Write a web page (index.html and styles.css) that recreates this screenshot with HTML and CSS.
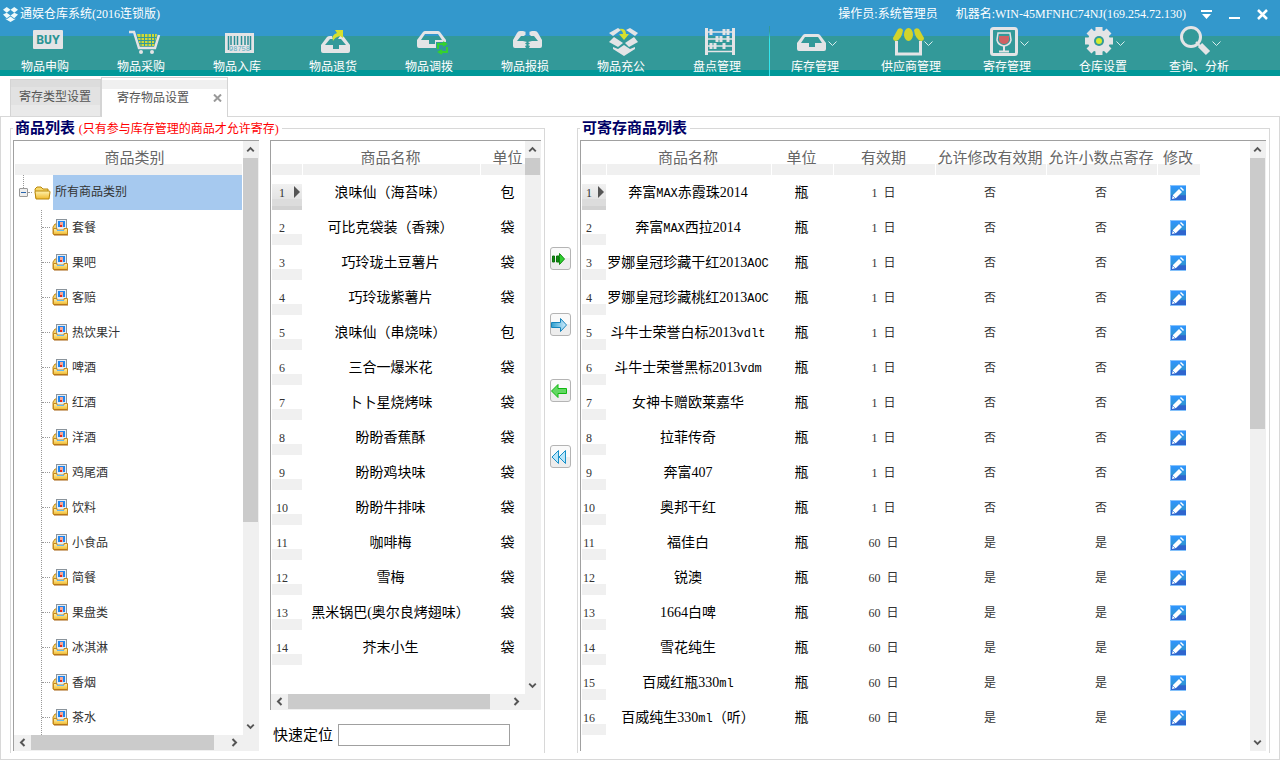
FILE: index.html
```html
<!DOCTYPE html>
<html lang="zh-CN">
<head>
<meta charset="utf-8">
<title>通娱仓库系统(2016连锁版)</title>
<link rel="stylesheet" href="styles.css">
</head>
<body>
<svg class="defs" aria-hidden="true">
  <defs>
    <linearGradient id="gold" x1="0" y1="0" x2="0" y2="1"><stop offset="0" stop-color="#fff3b0"/><stop offset="1" stop-color="#f0b92c"/></linearGradient>
    <linearGradient id="sky" x1="0" y1="0" x2="1" y2="0"><stop offset="0" stop-color="#2f9fce"/><stop offset="1" stop-color="#d4efff"/></linearGradient>
    <linearGradient id="edit-bg" x1="0" y1="0" x2="0" y2="1"><stop offset="0" stop-color="#2f95ff"/><stop offset="0.6" stop-color="#2f95d4"/><stop offset="0.7" stop-color="#2f66cf"/><stop offset="1" stop-color="#2f66cf"/></linearGradient>
  </defs>
  <symbol id="i-up" viewBox="0 0 16 17"><path d="M4.500 10.500L8 7L11.500 10.500" fill="none" stroke="#555" stroke-width="2"/></symbol>
  <symbol id="i-down" viewBox="0 0 16 17"><path d="M4.500 6.500L8 10L11.500 6.500" fill="none" stroke="#555" stroke-width="2"/></symbol>
  <symbol id="i-left" viewBox="0 0 17 15"><path d="M10.500 4L7 7.500L10.500 11" fill="none" stroke="#555" stroke-width="2"/></symbol>
  <symbol id="i-right" viewBox="0 0 17 15"><path d="M6.500 4L10 7.500L6.500 11" fill="none" stroke="#555" stroke-width="2"/></symbol>
  <symbol id="i-tray" viewBox="0 0 29 17"><path fill="#e4e4e6" fill-rule="evenodd" d="M0 9L6 1Q7 0 8 0H21Q22 0 23 1L29 9V15Q29 17 27 17H2Q0 17 0 15ZM8 3H21L25 9H18V13H12V9H4Z"/></symbol>
  <symbol id="i-item" viewBox="0 0 17 17">
    <path d="M1 8L3 5H5V15H1Z" fill="#f5d36a" stroke="#c58a1c"/>
    <rect x="4.500" y="0.500" width="10" height="11" fill="#e3edf7" stroke="#8a949c"/>
    <rect x="6" y="2" width="7" height="6" fill="#1d86f0"/><rect x="8" y="3" width="3" height="5" fill="#f6a796"/><rect x="8" y="6" width="2" height="2" fill="#e32b1c"/>
    <path d="M1.500 9.500H5V11H12V9.500H15.500V15.500H1.500Z" fill="url(#gold)" stroke="#c58a1c"/>
    <path d="M5 11.500H12" stroke="#62b9f4"/><path d="M2 16H16" stroke="#a86414"/>
  </symbol>
  <symbol id="i-edit" viewBox="0 0 16 16">
    <rect width="16" height="16" fill="#85c2fb"/><rect x="1" y="1" width="15" height="14" fill="url(#edit-bg)"/>
    <path d="M2 14L3 10L9 4L12 7L6 13Z" fill="#fff"/><path d="M10 3L11 2L14 5L13 6Z" fill="#fff"/><path d="M3 11L5 13" stroke="#63aef0"/>
  </symbol>
  <symbol id="i-drop" viewBox="0 0 9 6"><path d="M0.500 0.500L4.500 4.500L8.500 0.500" fill="none" stroke="#d9eeee"/></symbol>
</svg>

<header class="app-header">
  <div class="titlebar">
    <svg class="logo" viewBox="0 0 16 16" aria-hidden="true"><g fill="#eefafa"><path d="M4 0L8 3L4 6L0 3Z"/><path d="M12 0L16 3L12 6L8 3Z"/><path d="M0 8L4 6L8 9L4 12Z"/><path d="M16 8L12 6L8 9L12 12Z"/><path d="M3 12L4 13L8 10L12 13L13 12V13L8 16L3 13Z"/></g></svg>
    <h1 class="app-title">通娱仓库系统(2016连锁版)</h1>
    <span class="session">操作员:系统管理员</span>
    <span class="session">机器名:WIN-45MFNHC74NJ(169.254.72.130)</span>
    <div class="window-buttons">
      <button type="button" aria-label="菜单"><svg viewBox="0 0 11 11"><path d="M0 1H11V3H0ZM1 5H10L5.500 10Z" fill="#fff"/></svg></button>
      <button type="button" aria-label="最小化"><svg viewBox="0 0 11 11"><path d="M0 8H11V10H0Z" fill="#fff"/></svg></button>
      <button type="button" aria-label="关闭"><svg viewBox="0 0 11 11"><path d="M1 1L10 10M10 1L1 10" stroke="#fff" stroke-width="2.500"/></svg></button>
    </div>
  </div>
  <nav class="toolbar">
    <div class="tool-group">
      <button type="button" class="tool"><svg viewBox="0 0 40 32"><rect x="8" y="4" width="30" height="19" rx="1" fill="#e4e4e6"/><text x="23" y="18" class="buy">BUY</text></svg>物品申购</button>
      <button type="button" class="tool"><svg viewBox="0 0 40 32"><path d="M8 6H13L18 22H34L38 9" fill="none" stroke="#e4e4e6" stroke-width="2.500"/><path d="M16 8H36L33 20H19Z" fill="#d2d936"/><path d="M16 11.500H35M17 14.500H34M18 17.500H34M20 8V20M23.500 8V20M27 8V20M30.500 8V20M33.500 8V18" stroke="#339999"/><circle cx="20" cy="26" r="2" fill="#e4e4e6"/><circle cx="31" cy="26" r="2" fill="#e4e4e6"/></svg>物品采购</button>
      <button type="button" class="tool"><svg viewBox="0 0 40 32"><rect x="8" y="7" width="29" height="20" fill="#e4e4e6"/><path d="M11.500 10V24M14 10V19M17.500 10V19M20.500 10V19M24.500 10V19M28 10V19M31 10V19M33.500 10V24" stroke="#2b8f96" stroke-width="1.500"/><text x="22.500" y="25" class="barcode">98758</text></svg>物品入库</button>
      <button type="button" class="tool"><svg viewBox="0 0 40 32"><path fill="#e4e4e6" d="M8 19L14 11Q15 10 17 10H19L20 13H17L12 19H20V23H26V19H33L28 13H25L27 10H29Q30 10 31 11L37 19V25Q37 27 35 27H10Q8 27 8 25Z"/><path d="M20 15Q18 9 24 7L22 4H30V12L27 10Q22 11 20 15Z" fill="#d5e02f"/></svg>物品退货</button>
      <button type="button" class="tool"><svg viewBox="0 0 40 32"><use href="#i-tray" x="8" y="5" width="29" height="17"/><rect x="27" y="16" width="13" height="13" fill="#339999"/><path d="M29 23V18H36M34 16L37 18L34 20M38 21V26H31M33 24L30 26L33 28" fill="none" stroke="#35d12e" stroke-width="2"/></svg>物品调拨</button>
      <button type="button" class="tool"><svg viewBox="0 0 40 32"><path fill="#e4e4e6" d="M8 14L12 7Q13 5 15 5H18L21 6L20 7L21 8L19 10H16L12 15H18L22 16L20 17.500L22 19L20 20L21 22H10Q8 22 8 20ZM37 14L33 7Q32 5 30 5H27L24 6L25 7L24 8L26 10H29L33 15H27L23 16L25 17.500L23 19L25 20L24 22H35Q37 22 37 20Z"/></svg>物品报损</button>
      <button type="button" class="tool"><svg viewBox="0 0 40 32"><g fill="#e4e4e6"><path d="M8 7L17 2L20 4L12 10Z"/><path d="M37 7L29 2L25 4L34 10Z"/><path d="M8 16L13 11L22 17L17 21Z"/><path d="M37 16L33 11L24 17L28 21Z"/><path d="M12 21L17 23L23 19L29 23L34 21V23L23 30L12 23Z"/></g><path d="M18 3Q25 2 25 8H28L23 14L18 8H22Q22 5 18 3Z" fill="#d5e02f"/></svg>物品充公</button>
      <button type="button" class="tool"><svg viewBox="0 0 40 32"><path d="M9.500 2V29M36.500 2V29" stroke="#e4e4e6" stroke-width="3"/><path d="M11 6H35M11 13H35M11 20H35M11 25.500H35" stroke="#e4e4e6" stroke-width="1.500"/><path d="M14 3V9M27 3V9M31 3V9M20 10V16M24 10V16M31 10V16M14 17V23M18 17V23M27 17V23" stroke="#e4e4e6" stroke-width="3"/></svg>盘点管理</button>
    </div>
    <div class="tool-group tool-group-menus">
      <button type="button" class="tool"><svg class="wide" viewBox="0 0 46 32"><use href="#i-tray" x="5" y="8" width="29" height="17"/><use href="#i-drop" x="36" y="15" width="9" height="6"/></svg>库存管理</button>
      <button type="button" class="tool"><svg class="wide" viewBox="0 0 46 32"><path d="M8.500 15V28H32.500V15" fill="none" stroke="#e4e4e6" stroke-width="3"/><g fill="#d2d42b"><path d="M10 3Q13 1 15 4Q14 13 8 15Q5 15 5 12Z"/><ellipse cx="20.500" cy="8.500" rx="4.500" ry="6.500"/><path d="M31 3Q28 1 26 4Q27 13 33 15Q36 15 36 12Z"/></g><use href="#i-drop" x="36" y="15" width="9" height="6"/></svg>供应商管理</button>
      <button type="button" class="tool"><svg class="wide" viewBox="0 0 46 32"><rect x="7.500" y="2.500" width="25" height="26" rx="2" fill="#339999" stroke="#e4e4e6" stroke-width="3"/><path d="M14 7H26L27 14Q26 19 20 20Q14 19 13 14Z" fill="none" stroke="#e4e4e6" stroke-width="1.500"/><path d="M15 10H25V14Q24 18 20 18Q16 18 15 14Z" fill="#cf6163"/><path d="M20 20V25M15 25.500H25" stroke="#e4e4e6" stroke-width="2"/><use href="#i-drop" x="36" y="15" width="9" height="6"/></svg>寄存管理</button>
      <button type="button" class="tool"><svg class="wide" viewBox="0 0 46 32"><path d="M19 1V29M5 15H33M9 5L29 25M29 5L9 25" stroke="#e4e4e6" stroke-width="7"/><circle cx="19" cy="15" r="8" fill="none" stroke="#e4e4e6" stroke-width="6"/><circle cx="19" cy="15" r="5" fill="#339999"/><circle cx="19" cy="15" r="3" fill="#d5ec2f"/><use href="#i-drop" x="36" y="15" width="9" height="6"/></svg>仓库设置</button>
      <button type="button" class="tool"><svg class="wide" viewBox="0 0 46 32"><circle cx="15" cy="11" r="9.500" fill="#339999" stroke="#e4e4e6" stroke-width="3"/><path d="M24 19L32 27" stroke="#e4e4e6" stroke-width="6"/><path d="M20 16L26 22" stroke="#e4e4e6" stroke-width="2"/><use href="#i-drop" x="36" y="15" width="9" height="6"/></svg>查询、分析</button>
    </div>
  </nav>
</header>

<div class="tabs" role="tablist">
  <button type="button" class="tab" role="tab" aria-selected="false">寄存类型设置</button>
  <div class="tab tab-active"><button type="button" class="tab-label" role="tab" aria-selected="true">寄存物品设置</button><button type="button" class="tab-close" aria-label="关闭标签"><svg viewBox="0 0 9 8"><path d="M1 0.500L8 7.500M8 0.500L1 7.500" stroke="#999" stroke-width="2"/></svg></button></div>
</div>

<main class="page">
  <fieldset class="group group-source">
    <legend>商品列表 <span class="note">(只有参与库存管理的商品才允许寄存)</span></legend>
    <div class="source-columns">
      <section class="listbox tree">
        <div class="viewport">
          <h2 class="tree-head">商品类别</h2>
          <div class="tree-root"><button type="button" class="expander" aria-label="折叠"></button><span class="dash-short"></span><svg class="folder" viewBox="0 0 17 14" aria-hidden="true"><path d="M1 3L3 1H7L9 3H14V12H2Z" fill="#f7d869" stroke="#b8860b"/><path d="M1 6Q1 5 2 5H15Q16 5 16 6L15 13H2Z" fill="url(#gold)" stroke="#b8860b"/></svg><span class="root-label">所有商品类别</span></div>
          <ul class="tree-items">
            <li><svg><use href="#i-item"/></svg>套餐</li>
            <li><svg><use href="#i-item"/></svg>果吧</li>
            <li><svg><use href="#i-item"/></svg>客赔</li>
            <li><svg><use href="#i-item"/></svg>热饮果汁</li>
            <li><svg><use href="#i-item"/></svg>啤酒</li>
            <li><svg><use href="#i-item"/></svg>红酒</li>
            <li><svg><use href="#i-item"/></svg>洋酒</li>
            <li><svg><use href="#i-item"/></svg>鸡尾酒</li>
            <li><svg><use href="#i-item"/></svg>饮料</li>
            <li><svg><use href="#i-item"/></svg>小食品</li>
            <li><svg><use href="#i-item"/></svg>简餐</li>
            <li><svg><use href="#i-item"/></svg>果盘类</li>
            <li><svg><use href="#i-item"/></svg>冰淇淋</li>
            <li><svg><use href="#i-item"/></svg>香烟</li>
            <li><svg><use href="#i-item"/></svg>茶水</li>
          </ul>
        </div>
        <div class="vbar"><button type="button" aria-label="向上"><svg><use href="#i-up"/></svg></button><div class="track"><div class="thumb" style="height:65%"></div></div><button type="button" aria-label="向下"><svg><use href="#i-down"/></svg></button></div>
        <div class="hbar"><button type="button" aria-label="向左"><svg><use href="#i-left"/></svg></button><div class="track"><div class="thumb" style="width:94%"></div></div><button type="button" aria-label="向右"><svg><use href="#i-right"/></svg></button></div>
      </section>

      <div class="goods">
        <section class="listbox">
          <div class="viewport">
            <table class="grid grid-source">
              <colgroup><col class="c-index"><col class="c-name"><col class="c-unit"></colgroup>
              <thead><tr><th></th><th>商品名称</th><th>单位</th></tr></thead>
              <tbody>
                <tr class="current"><td>1</td><td>浪味仙（海苔味）</td><td>包</td></tr>
                <tr><td>2</td><td>可比克袋装（香辣）</td><td>袋</td></tr>
                <tr><td>3</td><td>巧玲珑土豆薯片</td><td>袋</td></tr>
                <tr><td>4</td><td>巧玲珑紫薯片</td><td>袋</td></tr>
                <tr><td>5</td><td>浪味仙（串烧味）</td><td>包</td></tr>
                <tr><td>6</td><td>三合一爆米花</td><td>袋</td></tr>
                <tr><td>7</td><td>卜卜星烧烤味</td><td>袋</td></tr>
                <tr><td>8</td><td>盼盼香蕉酥</td><td>袋</td></tr>
                <tr><td>9</td><td>盼盼鸡块味</td><td>袋</td></tr>
                <tr><td>10</td><td>盼盼牛排味</td><td>袋</td></tr>
                <tr><td>11</td><td>咖啡梅</td><td>袋</td></tr>
                <tr><td>12</td><td>雪梅</td><td>袋</td></tr>
                <tr><td>13</td><td>黑米锅巴(奥尔良烤翅味）</td><td>袋</td></tr>
                <tr><td>14</td><td>芥末小生</td><td>袋</td></tr>
              </tbody>
            </table>
          </div>
          <div class="vbar"><button type="button" aria-label="向上"><svg><use href="#i-up"/></svg></button><div class="track"><div class="thumb thumb-min"></div></div><button type="button" aria-label="向下"><svg><use href="#i-down"/></svg></button></div>
          <div class="hbar"><button type="button" aria-label="向左"><svg><use href="#i-left"/></svg></button><div class="track"><div class="thumb" style="width:92%"></div></div><button type="button" aria-label="向右"><svg><use href="#i-right"/></svg></button></div>
        </section>
        <div class="quick"><label for="quick">快速定位</label><input id="quick" type="text"></div>
      </div>
    </div>
  </fieldset>

  <div class="transfer">
    <button type="button" aria-label="添加"><svg viewBox="0 0 16 14"><path d="M1.500 4H3.500V10H1.500ZM5.500 4H8V10H5.500Z" fill="#138a13" stroke="#0c720c"/><path d="M8.500 4.500V1.500L13.500 7L8.500 12.500V4.500" fill="#2fcf2f" stroke="#0f8a0f"/></svg></button>
    <button type="button" aria-label="全部添加"><svg viewBox="0 0 16 14"><path d="M0.500 4.500H9.500V0.500L15.500 7L9.500 13.500V9.500H0.500Z" fill="url(#sky)" stroke="#1784bb"/></svg></button>
    <button type="button" aria-label="移除"><svg viewBox="0 0 16 14"><path d="M15.500 4.500H7V0.500L0.500 7L7 13.500V9.500H15.500Z" fill="#62d862" stroke="#0fb80f"/></svg></button>
    <button type="button" aria-label="全部移除"><svg viewBox="0 0 16 14"><path d="M7.500 0.500V13.500L1 7ZM14.500 0.500V13.500L8 7Z" fill="#b9e6fa" stroke="#1790c8"/></svg></button>
  </div>

  <fieldset class="group group-target">
    <legend>可寄存商品列表</legend>
    <section class="listbox listbox-tall">
      <div class="viewport">
        <table class="grid grid-target">
          <colgroup><col class="c-index"><col class="c-name"><col class="c-unit"><col class="c-term"><col class="c-flag"><col class="c-flag"><col class="c-edit"></colgroup>
          <thead><tr><th></th><th>商品名称</th><th>单位</th><th>有效期</th><th>允许修改有效期</th><th>允许小数点寄存</th><th>修改</th></tr></thead>
          <tbody>
            <tr class="current"><td>1</td><td>奔富<span class="latin">MAX</span>赤霞珠2014</td><td>瓶</td><td>1&nbsp; 日</td><td>否</td><td>否</td><td><button type="button" aria-label="修改"><svg><use href="#i-edit"/></svg></button></td></tr>
            <tr><td>2</td><td>奔富<span class="latin">MAX</span>西拉2014</td><td>瓶</td><td>1&nbsp; 日</td><td>否</td><td>否</td><td><button type="button" aria-label="修改"><svg><use href="#i-edit"/></svg></button></td></tr>
            <tr><td>3</td><td>罗娜皇冠珍藏干红2013<span class="latin">AOC</span></td><td>瓶</td><td>1&nbsp; 日</td><td>否</td><td>否</td><td><button type="button" aria-label="修改"><svg><use href="#i-edit"/></svg></button></td></tr>
            <tr><td>4</td><td>罗娜皇冠珍藏桃红2013<span class="latin">AOC</span></td><td>瓶</td><td>1&nbsp; 日</td><td>否</td><td>否</td><td><button type="button" aria-label="修改"><svg><use href="#i-edit"/></svg></button></td></tr>
            <tr><td>5</td><td>斗牛士荣誉白标2013<span class="latin">vdlt</span></td><td>瓶</td><td>1&nbsp; 日</td><td>否</td><td>否</td><td><button type="button" aria-label="修改"><svg><use href="#i-edit"/></svg></button></td></tr>
            <tr><td>6</td><td>斗牛士荣誉黑标2013<span class="latin">vdm</span></td><td>瓶</td><td>1&nbsp; 日</td><td>否</td><td>否</td><td><button type="button" aria-label="修改"><svg><use href="#i-edit"/></svg></button></td></tr>
            <tr><td>7</td><td>女神卡赠欧莱嘉华</td><td>瓶</td><td>1&nbsp; 日</td><td>否</td><td>否</td><td><button type="button" aria-label="修改"><svg><use href="#i-edit"/></svg></button></td></tr>
            <tr><td>8</td><td>拉菲传奇</td><td>瓶</td><td>1&nbsp; 日</td><td>否</td><td>否</td><td><button type="button" aria-label="修改"><svg><use href="#i-edit"/></svg></button></td></tr>
            <tr><td>9</td><td>奔富407</td><td>瓶</td><td>1&nbsp; 日</td><td>否</td><td>否</td><td><button type="button" aria-label="修改"><svg><use href="#i-edit"/></svg></button></td></tr>
            <tr><td>10</td><td>奥邦干红</td><td>瓶</td><td>1&nbsp; 日</td><td>否</td><td>否</td><td><button type="button" aria-label="修改"><svg><use href="#i-edit"/></svg></button></td></tr>
            <tr><td>11</td><td>福佳白</td><td>瓶</td><td>60&nbsp; 日</td><td>是</td><td>是</td><td><button type="button" aria-label="修改"><svg><use href="#i-edit"/></svg></button></td></tr>
            <tr><td>12</td><td>锐澳</td><td>瓶</td><td>60&nbsp; 日</td><td>是</td><td>是</td><td><button type="button" aria-label="修改"><svg><use href="#i-edit"/></svg></button></td></tr>
            <tr><td>13</td><td>1664白啤</td><td>瓶</td><td>60&nbsp; 日</td><td>是</td><td>是</td><td><button type="button" aria-label="修改"><svg><use href="#i-edit"/></svg></button></td></tr>
            <tr><td>14</td><td>雪花纯生</td><td>瓶</td><td>60&nbsp; 日</td><td>是</td><td>是</td><td><button type="button" aria-label="修改"><svg><use href="#i-edit"/></svg></button></td></tr>
            <tr><td>15</td><td>百威红瓶330<span class="latin">ml</span></td><td>瓶</td><td>60&nbsp; 日</td><td>是</td><td>是</td><td><button type="button" aria-label="修改"><svg><use href="#i-edit"/></svg></button></td></tr>
            <tr><td>16</td><td>百威纯生330<span class="latin">ml</span>（听）</td><td>瓶</td><td>60&nbsp; 日</td><td>是</td><td>是</td><td><button type="button" aria-label="修改"><svg><use href="#i-edit"/></svg></button></td></tr>
          </tbody>
        </table>
      </div>
      <div class="vbar"><button type="button" aria-label="向上"><svg><use href="#i-up"/></svg></button><div class="track"><div class="thumb" style="height:47%"></div></div><button type="button" aria-label="向下"><svg><use href="#i-down"/></svg></button></div>
    </section>
  </fieldset>
</main>
</body>
</html>
```

FILE: styles.css
```css
* { box-sizing: border-box; }

body {
  display: flex;
  flex-direction: column;
  height: 100vh;
  margin: 0;
  overflow: hidden;
  background: #fff;
  color: #333;
  font: 12px/18px "Liberation Serif", "Noto Sans CJK SC", sans-serif;
}

button {
  padding: 0;
  border: 0;
  background: none;
  color: inherit;
  font: inherit;
}

svg { display: block; flex: none; }
.defs { position: absolute; width: 0; height: 0; }

/* Header */
.app-header {
  flex: none;
  height: 76px;
  background: linear-gradient(#3398cc 36px, #339999 36px, #339999 70px, #009999 70px);
  color: #fff;
}
.titlebar {
  display: flex;
  align-items: center;
  height: 26px;
  padding: 2px 12px 0 3px;
}
.logo { width: 15px; height: 15px; margin-right: 2px; }
.app-title { flex: 1; margin: 0; font: inherit; }
.session { margin-left: 18px; white-space: nowrap; }
.window-buttons { display: flex; gap: 17px; margin-left: 15px; }
.window-buttons svg { width: 11px; height: 11px; }

.toolbar { display: flex; }
.tool-group { display: flex; gap: 24px; padding: 0 16px 0 9px; }
.tool-group-menus {
  border-left: 1px solid #33e6ee;
  border-image: linear-gradient(#339999 6px, #33e6ee 14px) 1;
}
.tool {
  display: flex;
  flex-direction: column;
  align-items: center;
  width: 72px;
  height: 50px;
  white-space: nowrap;
}
.tool svg { width: 40px; height: 32px; }
.tool .wide { width: 46px; }
.buy { fill: #2b9494; font: bold 13px "DejaVu Sans Mono", monospace; text-anchor: middle; }
.barcode { fill: #5cb0c4; font: 7px "Liberation Mono", monospace; text-anchor: middle; }

/* Tabs */
.tabs {
  display: flex;
  flex: none;
  align-items: flex-end;
  height: 41px;
  margin-bottom: -1px;
  padding-left: 10px;
  color: #555;
}
.tab {
  height: 38px;
  padding: 0 9px 2px 8px;
  border: 1px solid #d4d4d4;
  background: linear-gradient(#dcdcdc 7px, #e2e2e2 7px, #e2e2e2 25px, #e9e9e9 25px);
}
.tab-active {
  z-index: 1;
  display: flex;
  gap: 24px;
  align-items: center;
  height: 40px;
  padding: 0 5px 0 15px;
  border-bottom: 0;
  background: linear-gradient(#fff 2px, #f0f0f0 2px, #f0f0f0 11px, #fff 11px);
}
.tab-close svg { width: 9px; height: 8px; }

/* Page */
.page {
  display: flex;
  flex: 1;
  min-height: 0;
  padding: 0 9px 6px;
  border: 1px solid #d8d8d8;
}
.group {
  display: flex;
  flex-direction: column;
  min-width: 0;
  margin: 0;
  padding: 0 3px 2px 2px;
  border: 1px solid #d8d8d8;
  border-bottom: 0;
}
.group-source { flex: none; }
.group-target { flex: 1; }
legend {
  height: 23px;
  padding: 0 3px 0 2px;
  color: #000066;
  font-size: 15px;
  font-weight: bold;
  line-height: 23px;
}
.note { color: #f00; font-size: 12px; font-weight: normal; }
.source-columns { display: flex; flex: 1; gap: 11px; min-height: 0; }

/* List boxes with their scroll bars */
.listbox {
  display: grid;
  flex: 1;
  grid-template: minmax(0, 1fr) 16px / minmax(0, 1fr) 16px;
  min-height: 0;
  border: solid #a0a0a0;
  border-width: 1px 0 0 1px;
  background: #f0f0f0;
}
.listbox-tall { grid-template-rows: minmax(0, 1fr); }
.viewport { overflow: hidden; background: #fff; }
.vbar { display: flex; flex-direction: column; width: 15px; }
.hbar { display: flex; height: 15px; }
.vbar svg { width: 15px; height: 17px; }
.hbar svg { width: 17px; height: 15px; }
.track { flex: 1; }
.thumb { height: 100%; background: #cbcbcb; }
.thumb-min { height: 17px; }

/* Category tree */
.tree { flex: none; width: 246px; }
.tree-head {
  height: 34px;
  margin: 0 1px;
  padding-left: 12px;
  background: linear-gradient(to top, #f0f0f0 11px, transparent 11px);
  color: #666;
  font-size: 15px;
  font-weight: normal;
  line-height: 34px;
  text-align: center;
}
.tree-root {
  display: flex;
  align-items: center;
  height: 35px;
  padding: 0 1px 0 5px;
  background: repeating-linear-gradient(#999 0 1px, #fff 1px 2px) 9px 0 / 1px 13px no-repeat;
}
.expander {
  width: 9px;
  height: 9px;
  border: 1px solid #999;
  border-radius: 1px;
  background: linear-gradient(#2a66ad, #2a66ad) center / 5px 1px no-repeat #eee;
}
.dash-short { width: 4px; margin-right: 2px; border-top: 1px dotted #999; }
.folder { width: 17px; height: 14px; margin-right: 2px; }
.root-label { flex: 1; padding-left: 2px; background: #a6c9ef; line-height: 35px; }
.tree-items {
  margin: 0 0 0 27px;
  padding: 0;
  border-left: 1px dotted #999;
  list-style: none;
}
.tree-items li { display: flex; align-items: center; height: 35px; }
.tree-items li::before { width: 8px; margin-right: 2px; border-top: 1px dotted #999; content: ""; }
.tree-items svg { width: 17px; height: 17px; margin-right: 3px; }

/* Data grids */
.grid { border-collapse: separate; border-spacing: 0; table-layout: fixed; }
.grid-source { width: 266px; }
.grid-source .c-index { width: 32px; }
.grid-source .c-name { width: 178px; }
.grid-source .c-unit { width: 56px; }
.grid-target { width: 620px; }
.grid-target .c-index { width: 26px; }
.grid-target .c-name { width: 165px; }
.grid-target .c-unit { width: 62px; }
.grid-target .c-term { width: 102px; }
.grid-target .c-flag { width: 111px; }
.grid-target .c-edit { width: 43px; }
.grid th,
.grid td {
  height: 35px;
  padding: 0 2px 0 0;
  border-right: 1px solid #fff;
  text-align: center;
  white-space: nowrap;
}
.grid th {
  height: 34px;
  background: linear-gradient(to top, #f0f0f0 11px, transparent 11px);
  color: #666;
  font-size: 15px;
  font-weight: normal;
}
.grid th:first-child,
.grid td:first-child { border-left: 1px solid #fff; }
.grid td:first-child {
  padding-right: 10px;
  background: linear-gradient(to top, #f0f0f0 11px, transparent 11px);
}
.grid .current td:first-child {
  position: relative;
  background: linear-gradient(#fff 9px, #f1f1f1 9px, #ebebeb 15px, #e4e4e4 24px, #dcdcdc 24px, #dcdcdc 31px, #d2d2d2 31px);
}
.current td:first-child::after {
  position: absolute;
  top: 11px;
  right: 2px;
  border: 6px solid transparent;
  border-right: 0;
  border-left-color: #555;
  content: "";
}
.grid td:nth-child(2),
.grid td:nth-child(3) { color: #000; font-size: 14px; }
.latin { font: 12px "Liberation Mono", monospace; }
.grid td button { display: block; margin: 0 auto; }
.grid td svg { width: 16px; height: 16px; }

/* Quick search */
.goods { display: flex; flex-direction: column; width: 271px; }
.quick {
  display: flex;
  gap: 5px;
  align-items: center;
  padding: 14px 31px 5px 3px;
  color: #000;
  font-size: 15px;
}
.quick label { white-space: nowrap; }
.quick input {
  flex: 1;
  min-width: 0;
  height: 22px;
  border: 1px solid #a0a0a0;
  background: #fff;
  font: inherit;
}

/* Transfer buttons */
.transfer {
  display: flex;
  flex: none;
  flex-direction: column;
  gap: 43px;
  width: 32px;
  padding: 130px 6px 0 5px;
}
.transfer button {
  height: 23px;
  border: 1px solid #b4b4b4;
  border-radius: 3px;
  background: linear-gradient(#fafafa 50%, #ededed 50%);
}
.transfer svg { width: 16px; height: 14px; }
```
